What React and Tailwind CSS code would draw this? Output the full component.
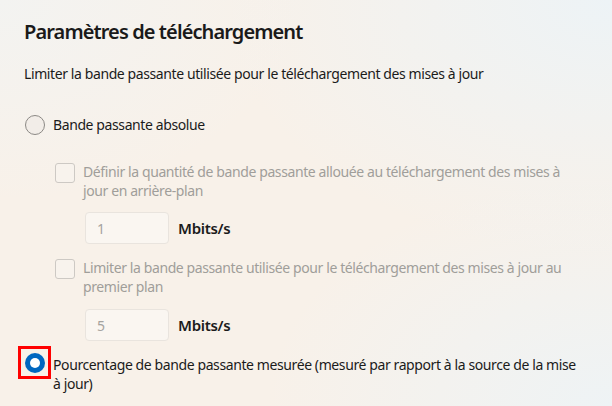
const font = { fontFamily: '"Segoe UI", "Noto Sans", sans-serif' };

function Radio({ checked }) {
  if (checked) {
    return (
      <span className="flex h-[20px] w-[20px] shrink-0 items-center justify-center rounded-full bg-[#0067c0]">
        <span className="h-[10px] w-[10px] rounded-full bg-white" />
      </span>
    );
  }
  return <span className="h-[20px] w-[20px] shrink-0 rounded-full border border-[#8c8985] bg-[#f2ede8]" />;
}

function Checkbox() {
  return <span className="mt-[1px] h-[20px] w-[20px] shrink-0 rounded-[3px] border border-[#cdc9c4] bg-[#f8f3ed]" />;
}

function SpeedInput({ value }) {
  return (
    <div className="ml-[85px] flex items-center gap-[9px]">
      <div className="flex h-[32px] w-[84px] items-center rounded-[4px] border border-[#e9e4de] bg-[#faf6f1] pl-[11px] text-[14px] text-[#a5a39f]">
        {value}
      </div>
      <span className="text-[15px] font-semibold tracking-[-0.3px] text-[#1b1b1b]">Mbits/s</span>
    </div>
  );
}

export default function App() {
  return (
    <div
      className="relative h-[406px] w-[612px] overflow-hidden bg-[#f8f1e9] bg-[radial-gradient(ellipse_at_0%_0%,#f3f3f1_0%,transparent_35%),radial-gradient(ellipse_at_100%_0%,#edf3f6_0%,transparent_45%),radial-gradient(ellipse_at_100%_100%,#eef3f5_0%,transparent_40%)] tracking-[-0.4px]"
      style={font}
    >
      <div className="pl-[24px] pr-[34px] pt-[18px]">
        <h1 className="text-[20px] font-semibold leading-[28px] tracking-[-0.9px] text-[#1a1a1a]">Paramètres de téléchargement</h1>
        <p className="mt-[18px] text-[14px] leading-[20px] text-[#1b1b1b]">
          Limiter la bande passante utilisée pour le téléchargement des mises à jour
        </p>

        <div className="mt-[31px] ml-[1px] flex items-center gap-[8px]">
          <Radio />
          <span className="text-[14px] leading-[20px] text-[#1b1b1b]">Bande passante absolue</span>
        </div>

        <div className="mt-[27px] ml-[31px] flex gap-[8px]">
          <Checkbox />
          <p className="text-[14px] leading-[19px] text-[#a09e9a]">
            Définir la quantité de bande passante allouée au téléchargement des mises à jour en arrière-plan
          </p>
        </div>

        <div className="mt-[12px] -ml-[24px]">
          <SpeedInput value="1" />
        </div>

        <div className="mt-[14px] ml-[31px] flex gap-[8px]">
          <Checkbox />
          <p className="text-[14px] leading-[19px] text-[#a09e9a]">
            Limiter la bande passante utilisée pour le téléchargement des mises à jour au premier plan
          </p>
        </div>

        <div className="mt-[13px] -ml-[24px]">
          <SpeedInput value="5" />
        </div>

        <div className="mt-[5px] -ml-[6px] flex items-start gap-[2px]">
          <span className="flex h-[33px] w-[33px] shrink-0 items-center justify-center border-[3px] border-[#ff0000]">
            <Radio checked />
          </span>
          <p className="pt-[9px] text-[14px] leading-[19px] text-[#1b1b1b]">
            Pourcentage de bande passante mesurée (mesuré par rapport à la source de la mise à jour)
          </p>
        </div>
      </div>
    </div>
  );
}
